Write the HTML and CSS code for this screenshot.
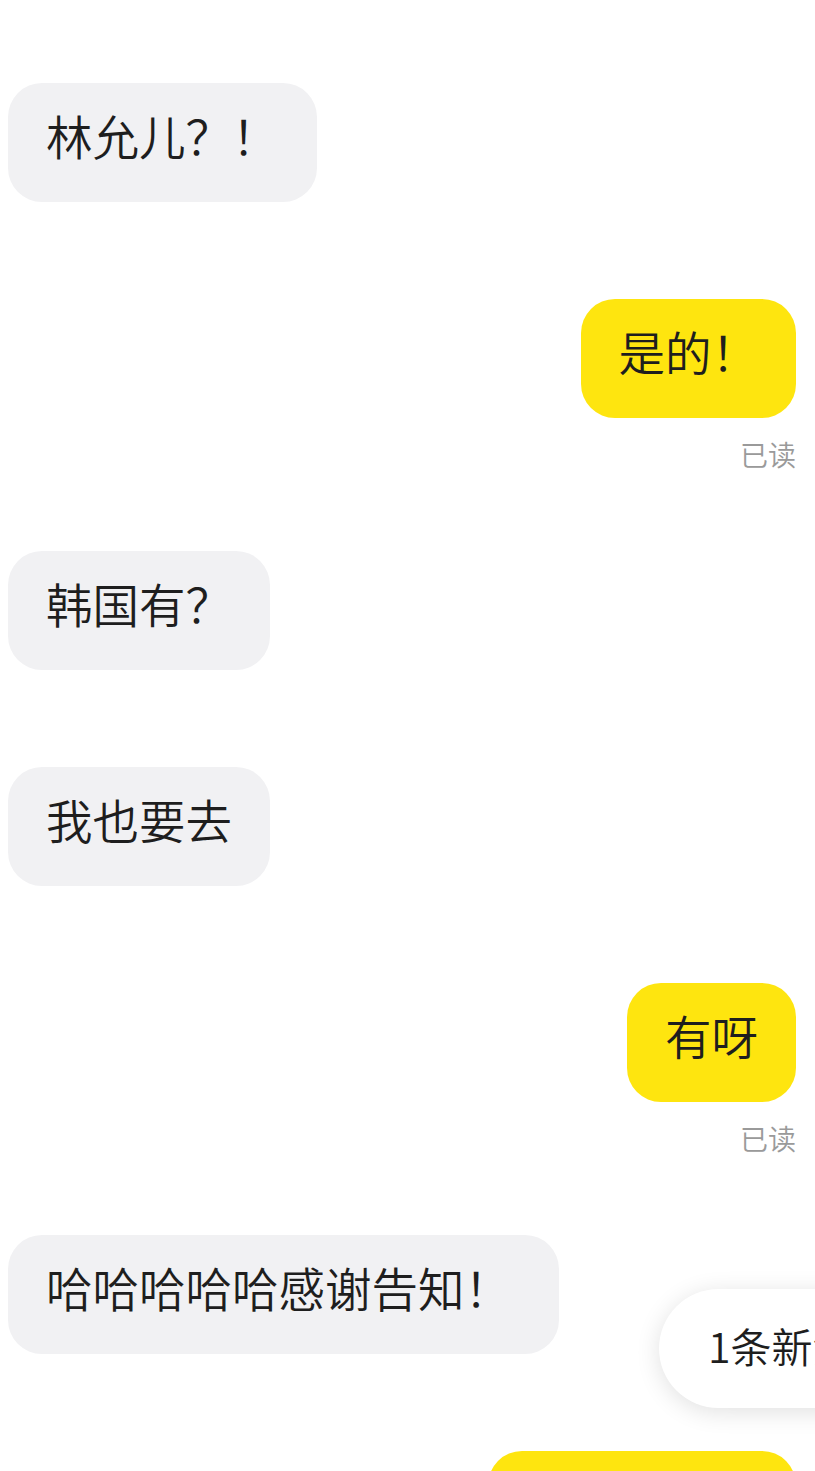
FILE: index.html
```html
<!DOCTYPE html>
<html lang="zh-CN">
<head>
<meta charset="utf-8">
<title>Chat</title>
<link rel="stylesheet" href="styles.css">
</head>
<body>
<main class="chat">
  <div class="row in"><div class="bubble gray">林允儿？！</div></div>
  <div class="row out with-receipt">
    <div class="bubble yellow">是的！</div>
    <div class="receipt">已读</div>
  </div>
  <div class="row in"><div class="bubble gray">韩国有？</div></div>
  <div class="row in"><div class="bubble gray">我也要去</div></div>
  <div class="row out with-receipt">
    <div class="bubble yellow">有呀</div>
    <div class="receipt">已读</div>
  </div>
  <div class="row in"><div class="bubble gray wide">哈哈哈哈哈感谢告知！</div></div>
  <div class="row out"><div class="bubble yellow">好的好的哦</div></div>
  <div class="new-pill">1条新消息</div>
</main>
</body>
</html>
```
FILE: styles.css
```css
* { box-sizing: border-box; }
html, body {
  margin: 0;
  padding: 0;
  background: #ffffff;
}
body {
  font-family: "Noto Sans CJK SC", "Noto Sans", sans-serif;
  color: #1e1e1e;
  overflow: hidden;
}
.chat {
  position: relative;
  display: flex;
  flex-direction: column;
  padding: 83px 19px 0 8px;
}
.row {
  display: flex;
  flex-direction: column;
  margin-bottom: 97px;
}
.row.with-receipt { margin-bottom: 83px; }
.row.in { align-items: flex-start; }
.row.out { align-items: flex-end; }
.bubble {
  height: 119px;
  line-height: 103px;
  padding: 0 38px 16px 38px;
  font-size: 46.5px;
  font-weight: 350;
  border-radius: 34px;
  white-space: nowrap;
}
.gray { background: #f1f1f3; }
.gray.wide { padding-right: 48px; }
.yellow { background: #fee50f; }
.receipt {
  margin-top: 22px;
  line-height: 28px;
  font-size: 28px;
  font-weight: 350;
  color: #9a9a9a;
}
.new-pill {
  position: absolute;
  left: 659px;
  top: 1289px;
  height: 119px;
  line-height: 112px;
  padding: 0 60px 7px 49px;
  border-radius: 60px;
  background: #ffffff;
  font-size: 41px;
  font-weight: 350;
  white-space: nowrap;
  box-shadow: 0 4px 24px rgba(0, 0, 0, 0.12);
}
```
